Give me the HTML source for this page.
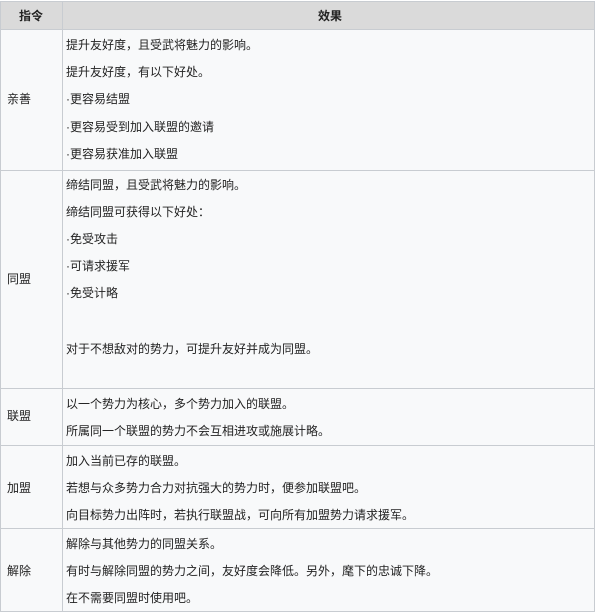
<!DOCTYPE html>
<html><head><meta charset="utf-8"><style>
*{margin:0;padding:0;box-sizing:border-box}
body{width:600px;height:613px;background:#fff;font-family:"Liberation Sans","Noto Sans CJK SC",sans-serif;font-size:12px;color:#222;position:relative;overflow:hidden}
.box{position:absolute;left:0;top:1px;width:595px;height:611px;background:#f8f9fa;border:1px solid #c8ccd1}
.hd{position:absolute;left:0;top:1px;width:595px;height:29px;background:#dadada;border:1px solid #c8ccd1}
.h{position:absolute;border-top:1px solid #c8ccd1;left:0;width:595px}
.v{position:absolute;left:62px;top:1px;height:611px;border-left:1px solid #c8ccd1}
.t{position:absolute;white-space:nowrap;line-height:14px}
.b{font-weight:bold}
</style></head><body>
<div class="box"></div><div class="hd"></div><div class="v"></div>
<div class="h" style="top:170px"></div>
<div class="h" style="top:388px"></div>
<div class="h" style="top:445px"></div>
<div class="h" style="top:528px"></div>
<div class="t b" style="left:19px;top:9px">指令</div>
<div class="t b" style="left:318px;top:9px">效果</div>
<div class="t" style="left:7px;top:92px">亲善</div>
<div class="t" style="left:7px;top:272px">同盟</div>
<div class="t" style="left:7px;top:409px">联盟</div>
<div class="t" style="left:7px;top:481px">加盟</div>
<div class="t" style="left:7px;top:564px">解除</div>
<div class="t" style="left:66px;top:38px">提升友好度，且受武将魅力的影响。</div>
<div class="t" style="left:66px;top:65px">提升友好度，有以下好处。</div>
<div class="t" style="left:66px;top:92px">·更容易结盟</div>
<div class="t" style="left:66px;top:120px">·更容易受到加入联盟的邀请</div>
<div class="t" style="left:66px;top:147px">·更容易获准加入联盟</div>
<div class="t" style="left:66px;top:178px">缔结同盟，且受武将魅力的影响。</div>
<div class="t" style="left:66px;top:205px">缔结同盟可获得以下好处：</div>
<div class="t" style="left:66px;top:232px">·免受攻击</div>
<div class="t" style="left:66px;top:259px">·可请求援军</div>
<div class="t" style="left:66px;top:286px">·免受计略</div>
<div class="t" style="left:66px;top:342px">对于不想敌对的势力，可提升友好并成为同盟。</div>
<div class="t" style="left:66px;top:397px">以一个势力为核心，多个势力加入的联盟。</div>
<div class="t" style="left:66px;top:424px">所属同一个联盟的势力不会互相进攻或施展计略。</div>
<div class="t" style="left:66px;top:454px">加入当前已存的联盟。</div>
<div class="t" style="left:66px;top:481px">若想与众多势力合力对抗强大的势力时，便参加联盟吧。</div>
<div class="t" style="left:66px;top:508px">向目标势力出阵时，若执行联盟战，可向所有加盟势力请求援军。</div>
<div class="t" style="left:66px;top:537px">解除与其他势力的同盟关系。</div>
<div class="t" style="left:66px;top:564px">有时与解除同盟的势力之间，友好度会降低。另外，麾下的忠诚下降。</div>
<div class="t" style="left:66px;top:591px">在不需要同盟时使用吧。</div>
</body></html>
